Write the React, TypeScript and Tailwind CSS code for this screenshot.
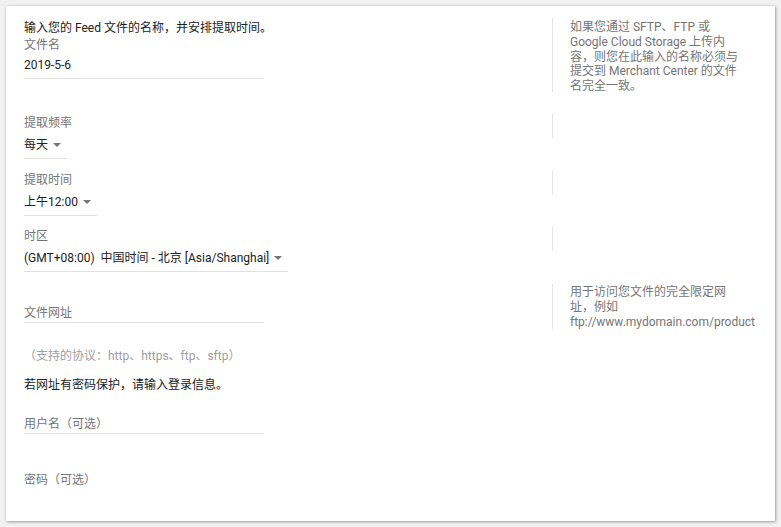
import React from "react";

const FONT = "font-['Roboto','Noto_Sans_CJK_SC',sans-serif]";

function Arrow() {
  return (
    <span className="ml-[5px] inline-block w-0 h-0 border-l-[4px] border-r-[4px] border-t-[4px] border-l-transparent border-r-transparent border-t-[#757575]" />
  );
}

function Help({ children, h }: { children?: React.ReactNode; h: string }) {
  return (
    <div className={`self-start border-l border-[#e4e4e4] pl-[17px] w-[190px] ${h}`}>
      <div className="w-[172px] pt-[2px] text-[12px] leading-[14.8px] text-[#757575]">{children}</div>
    </div>
  );
}

function SelectField({ label, value }: { label: string; value: string }) {
  return (
    <div>
      <div className="pt-[1px] text-[12px] leading-4 text-[#757575]">{label}</div>
      <div className="mt-[6px] inline-flex items-center pr-[6px] pb-[5px] border-b border-[#e0e0e0]">
        <span className="text-[12px] leading-4 text-[#212121] whitespace-pre">{value}</span>
        <Arrow />
      </div>
    </div>
  );
}

export default function App() {
  return (
    <div className={`w-[781px] h-[527px] bg-[#f1f1f1] pl-[6px] pt-[6px] ${FONT}`}>
      <div className="w-[769px] h-[515px] bg-white shadow-[0_0_2px_rgba(0,0,0,0.15),1px_1px_3px_rgba(0,0,0,0.3)] pl-[18px] pt-[12px]">
        {/* Row 1 */}
        <div className="flex">
          <div className="w-[528px]">
            <div className="pt-[2px] text-[12px] leading-4 text-[#212121]">
              输入您的 Feed 文件的名称，并安排提取时间。
            </div>
            <div className="mt-[1px] text-[12px] leading-4 text-[#757575]">文件名</div>
            <div className="mt-[4px] w-[240px] pb-[5px] border-b border-[#e0e0e0] text-[12px] leading-4 text-[#212121]">
              2019-5-6
            </div>
          </div>
          <Help h="h-[74px]">
            如果您通过 SFTP、FTP 或 Google Cloud Storage 上传内容，则您在此输入的名称必须与提交到 Merchant Center 的文件名完全一致。
          </Help>
        </div>

        {/* Row 2 */}
        <div className="flex mt-[22px]">
          <div className="w-[528px]">
            <SelectField label="提取频率" value="每天" />
          </div>
          <Help h="h-[24px]" />
        </div>

        {/* Row 3 */}
        <div className="flex mt-[12px]">
          <div className="w-[528px]">
            <SelectField label="提取时间" value="上午12:00" />
          </div>
          <Help h="h-[24px]" />
        </div>

        {/* Row 4 */}
        <div className="flex mt-[11px]">
          <div className="w-[528px]">
            <SelectField label="时区" value="(GMT+08:00)  中国时间 - 北京 [Asia/Shanghai]" />
          </div>
          <Help h="h-[24px]" />
        </div>

        {/* Row 5 */}
        <div className="flex mt-[12px] h-[45px]">
          <div className="w-[528px] pt-[21px]">
            <div className="w-[240px] pb-[1px] border-b border-[#e0e0e0] text-[12px] leading-4 text-[#757575]">
              文件网址
            </div>
          </div>
          <Help h="h-[45px]">
            <div className="whitespace-nowrap -mt-[1px]">
              用于访问您文件的完全限定网
              <br />
              址，例如
              <br />
              ftp://www.mydomain.com/product
            </div>
          </Help>
        </div>

        <div className="mt-[19px] text-[12px] leading-4 text-[#9e9e9e]">
          （支持的协议：http、https、ftp、sftp）
        </div>
        <div className="mt-[13px] text-[12px] leading-4 text-[#212121]">
          若网址有密码保护，请输入登录信息。
        </div>

        <div className="mt-[23px] w-[240px] pb-[1px] border-b border-[#e0e0e0] text-[12px] leading-4 text-[#757575]">
          用户名（可选）
        </div>

        <div className="mt-[38px] text-[12px] leading-4 text-[#757575]">密码（可选）</div>
      </div>
    </div>
  );
}
